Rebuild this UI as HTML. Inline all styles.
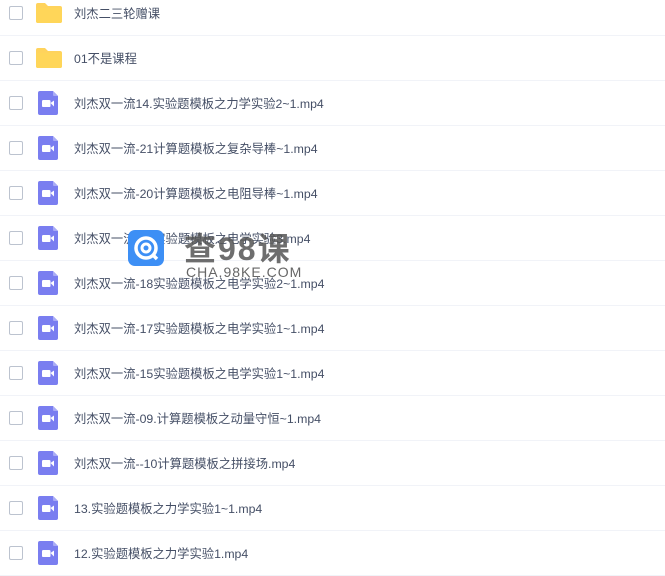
<!DOCTYPE html>
<html><head><meta charset="utf-8"><style>
html,body{margin:0;padding:0;width:665px;height:569px;overflow:hidden;background:#fff;font-family:"Liberation Sans","Noto Sans CJK SC",sans-serif}
.row{position:absolute;left:0;width:665px;height:45px;border-bottom:1px solid #f1f3f8;box-sizing:border-box}
.cb{position:absolute;left:9px;top:15px;width:12px;height:12px;border:1px solid #bcc3cf;border-radius:2px;background:#fff}
.t{position:absolute;left:74px;top:15px;font-size:12.3px;color:#454f66;line-height:16px;white-space:nowrap}
.fold{position:absolute;left:36px;top:12px;width:26px;height:20px}
.vid{position:absolute;left:38px;top:10px;width:20px;height:24px}
.wm{position:absolute;left:128px;top:230px}
</style></head><body>
<div id="list"></div>
<script>
var items=[["f","刘杰二三轮赠课"],["f","01不是课程"],["v","刘杰双一流14.实验题模板之力学实验2~1.mp4"],["v","刘杰双一流-21计算题模板之复杂导棒~1.mp4"],["v","刘杰双一流-20计算题模板之电阻导棒~1.mp4"],["v","刘杰双一流-16实验题模板之电学实验3.mp4"],["v","刘杰双一流-18实验题模板之电学实验2~1.mp4"],["v","刘杰双一流-17实验题模板之电学实验1~1.mp4"],["v","刘杰双一流-15实验题模板之电学实验1~1.mp4"],["v","刘杰双一流-09.计算题模板之动量守恒~1.mp4"],["v","刘杰双一流--10计算题模板之拼接场.mp4"],["v","13.实验题模板之力学实验1~1.mp4"],["v","12.实验题模板之力学实验1.mp4"]];
var fold='<svg class="fold" viewBox="0 0 26 20"><path d="M0 2a2 2 0 0 1 2-2h7l3 3h12a2 2 0 0 1 2 2v13a2 2 0 0 1-2 2H2a2 2 0 0 1-2-2z" fill="#ffd35c"/><path d="M0 5h26v13a2 2 0 0 1-2 2H2a2 2 0 0 1-2-2z" fill="#ffd659"/></svg>';
var vid='<svg class="vid" viewBox="0 0 20 24"><path d="M2 0h13l5 5v17a2 2 0 0 1-2 2H2a2 2 0 0 1-2-2V2a2 2 0 0 1 2-2z" fill="#7a7ef0"/><path d="M15 0l5 5h-4a1 1 0 0 1-1-1z" fill="#a9acf6"/><rect x="4" y="9" width="8.5" height="7" rx="1.3" fill="#fff"/><path d="M12.5 12l3.5-2.5v6z" fill="#fff"/></svg>';
var h='';
items.forEach(function(it,i){h+='<div class="row" style="top:'+(-9+45*i)+'px"><div class="cb"></div>'+(it[0]=="f"?fold:vid)+'<div class="t">'+it[1]+'</div></div>';});
document.getElementById('list').innerHTML=h;
</script>
<div class="wm">
<svg width="36" height="36" viewBox="0 0 36 36" style="position:absolute;left:0;top:0"><rect width="36" height="36" rx="7" fill="#3d8ff5"/><circle cx="18" cy="18" r="10" fill="none" stroke="#fff" stroke-width="3.5"/><circle cx="18" cy="18" r="4" fill="none" stroke="#fff" stroke-width="3"/><path d="M24 24l5 5" stroke="#fff" stroke-width="3.5"/></svg>
<div style="position:absolute;left:56px;top:-6px;font-size:32px;color:#555;font-weight:bold;white-space:nowrap;letter-spacing:2px;opacity:.85">查98课</div>
<div style="position:absolute;left:58px;top:34px;font-size:14px;color:#666;white-space:nowrap;letter-spacing:1px">CHA.98KE.COM</div>
</div>
</body></html>
